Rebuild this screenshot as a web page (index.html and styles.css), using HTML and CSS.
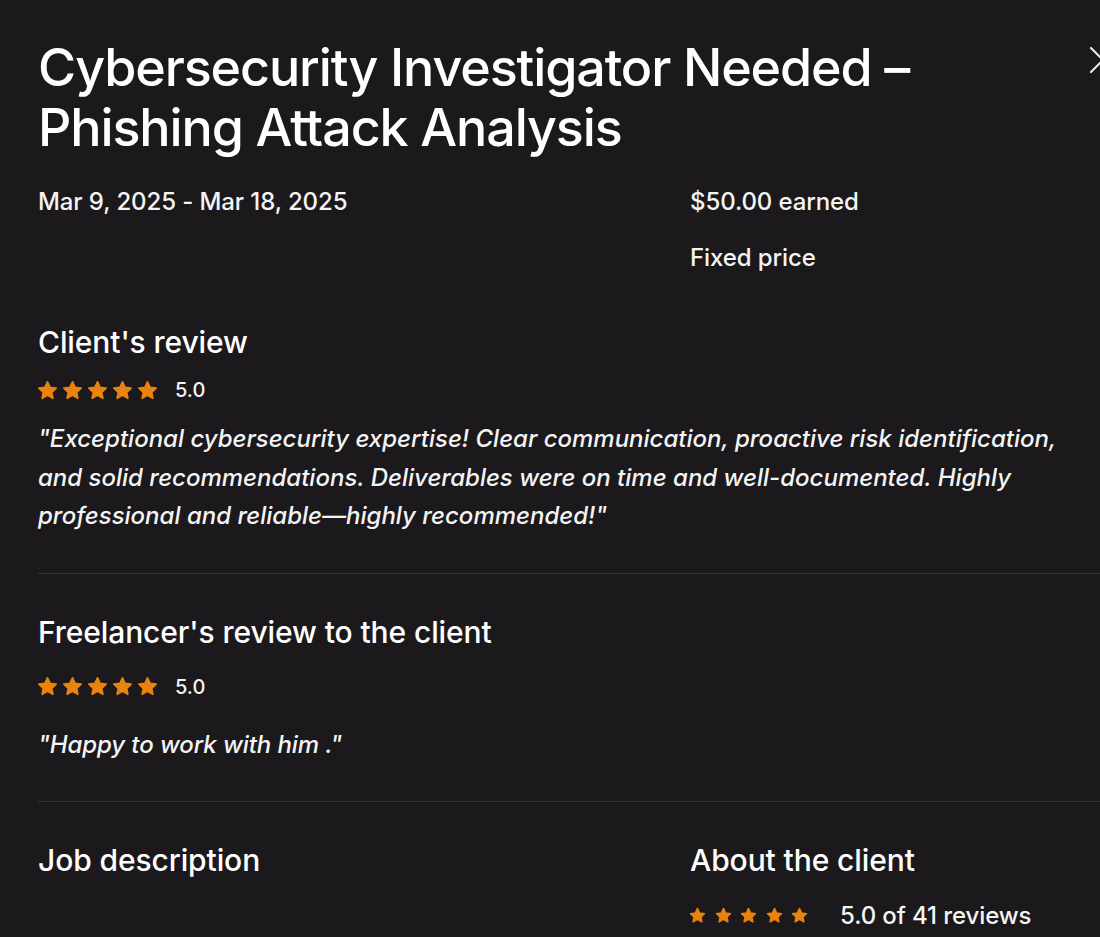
FILE: index.html
```html
<!DOCTYPE html>
<html>
<head>
<meta charset="utf-8">
<link rel="stylesheet" href="styles.css">
</head>
<body>
<div class="modal">
  <button class="close" aria-label="Close">
    <svg width="30" height="30" viewBox="0 0 30 30"><path d="M3 3 L27 27 M27 3 L3 27" stroke="#e8e8e8" stroke-width="2.2" fill="none" stroke-linecap="round"/></svg>
  </button>
  <h1 class="title">Cybersecurity Investigator Needed –<br>Phishing Attack Analysis</h1>

  <div class="meta">
    <div class="meta-left">Mar 9, 2025 - Mar 18, 2025</div>
    <div class="meta-right">
      <div class="earned">$50.00 earned</div>
      <div class="price-type">Fixed price</div>
    </div>
  </div>

  <section class="review">
    <h2 class="section-title">Client's review</h2>
    <div class="rating">
      <span class="stars">
        <svg viewBox="0 0 24 24"><path d="M12 3l2.7 5.8 6.3.8-4.6 4.3 1.2 6.2L12 17l-5.6 3.1 1.2-6.2L3 9.6l6.3-.8z"/></svg>
        <svg viewBox="0 0 24 24"><path d="M12 3l2.7 5.8 6.3.8-4.6 4.3 1.2 6.2L12 17l-5.6 3.1 1.2-6.2L3 9.6l6.3-.8z"/></svg>
        <svg viewBox="0 0 24 24"><path d="M12 3l2.7 5.8 6.3.8-4.6 4.3 1.2 6.2L12 17l-5.6 3.1 1.2-6.2L3 9.6l6.3-.8z"/></svg>
        <svg viewBox="0 0 24 24"><path d="M12 3l2.7 5.8 6.3.8-4.6 4.3 1.2 6.2L12 17l-5.6 3.1 1.2-6.2L3 9.6l6.3-.8z"/></svg>
        <svg viewBox="0 0 24 24"><path d="M12 3l2.7 5.8 6.3.8-4.6 4.3 1.2 6.2L12 17l-5.6 3.1 1.2-6.2L3 9.6l6.3-.8z"/></svg>
      </span>
      <span class="score">5.0</span>
    </div>
    <p class="quote">"Exceptional cybersecurity expertise! Clear communication, proactive risk identification, and solid recommendations. Deliverables were on time and well-documented. Highly professional and reliable—highly recommended!"</p>
  </section>

  <hr class="divider">

  <section class="review review-2">
    <h2 class="section-title">Freelancer's review to the client</h2>
    <div class="rating">
      <span class="stars">
        <svg viewBox="0 0 24 24"><path d="M12 3l2.7 5.8 6.3.8-4.6 4.3 1.2 6.2L12 17l-5.6 3.1 1.2-6.2L3 9.6l6.3-.8z"/></svg>
        <svg viewBox="0 0 24 24"><path d="M12 3l2.7 5.8 6.3.8-4.6 4.3 1.2 6.2L12 17l-5.6 3.1 1.2-6.2L3 9.6l6.3-.8z"/></svg>
        <svg viewBox="0 0 24 24"><path d="M12 3l2.7 5.8 6.3.8-4.6 4.3 1.2 6.2L12 17l-5.6 3.1 1.2-6.2L3 9.6l6.3-.8z"/></svg>
        <svg viewBox="0 0 24 24"><path d="M12 3l2.7 5.8 6.3.8-4.6 4.3 1.2 6.2L12 17l-5.6 3.1 1.2-6.2L3 9.6l6.3-.8z"/></svg>
        <svg viewBox="0 0 24 24"><path d="M12 3l2.7 5.8 6.3.8-4.6 4.3 1.2 6.2L12 17l-5.6 3.1 1.2-6.2L3 9.6l6.3-.8z"/></svg>
      </span>
      <span class="score">5.0</span>
    </div>
    <p class="quote quote-short">"Happy to work with him ."</p>
  </section>

  <hr class="divider divider-2">

  <div class="bottom">
    <div class="bottom-left">
      <h2 class="section-title">Job description</h2>
    </div>
    <div class="bottom-right">
      <h2 class="section-title">About the client</h2>
      <div class="rating rating-client">
        <span class="stars stars-small">
          <svg viewBox="0 0 24 24"><path d="M12 3l2.7 5.8 6.3.8-4.6 4.3 1.2 6.2L12 17l-5.6 3.1 1.2-6.2L3 9.6l6.3-.8z"/></svg>
          <svg viewBox="0 0 24 24"><path d="M12 3l2.7 5.8 6.3.8-4.6 4.3 1.2 6.2L12 17l-5.6 3.1 1.2-6.2L3 9.6l6.3-.8z"/></svg>
          <svg viewBox="0 0 24 24"><path d="M12 3l2.7 5.8 6.3.8-4.6 4.3 1.2 6.2L12 17l-5.6 3.1 1.2-6.2L3 9.6l6.3-.8z"/></svg>
          <svg viewBox="0 0 24 24"><path d="M12 3l2.7 5.8 6.3.8-4.6 4.3 1.2 6.2L12 17l-5.6 3.1 1.2-6.2L3 9.6l6.3-.8z"/></svg>
          <svg viewBox="0 0 24 24"><path d="M12 3l2.7 5.8 6.3.8-4.6 4.3 1.2 6.2L12 17l-5.6 3.1 1.2-6.2L3 9.6l6.3-.8z"/></svg>
        </span>
        <span class="score score-client">5.0 of 41 reviews</span>
      </div>
    </div>
  </div>
</div>
</body>
</html>
```

FILE: styles.css
```css
html, body {
  margin: 0;
  padding: 0;
  background: #1b191c;
  height: 100%;
  overflow: hidden;
}
body {
  font-family: Inter, "Liberation Sans", Arial, sans-serif;
  color: #f4f4f4;
}
.modal {
  position: relative;
  padding: 38px 0 0 38px;
  width: 1200px;
  box-sizing: border-box;
}
.close {
  position: absolute;
  left: 1088px;
  top: 45px;
  background: none;
  border: 0;
  padding: 0;
  width: 30px;
  height: 30px;
}
.close svg { display: block; }
.title {
  margin: 0;
  font-size: 52px;
  line-height: 60px;
  font-weight: 500;
  letter-spacing: -1.1px;
  color: #ffffff;
}
.meta {
  display: flex;
  margin-top: 30px;
  font-size: 24px;
  line-height: 28px;
  font-weight: 500;
  letter-spacing: -0.1px;
}
.meta-left { width: 652px; }
.meta-right { display: flex; flex-direction: column; gap: 28px; }
.review { margin-top: 54px; }
.section-title {
  margin: 0;
  font-size: 30px;
  line-height: 32px;
  font-weight: 500;
  letter-spacing: -0.1px;
  color: #ffffff;
}
.rating {
  display: flex;
  align-items: center;
  margin-top: 20px;
  height: 24px;
}
.stars { display: flex; gap: 2px; margin-left: -2px; }
.stars svg {
  width: 23px;
  height: 23px;
  fill: #e9820f;
  stroke: #e9820f;
  stroke-width: 1.8;
  stroke-linejoin: round;
  display: block;
}
.score { margin-left: 16px; font-size: 20px; font-weight: 500; }
.quote {
  margin: 18px 0 0;
  font-style: italic;
  font-size: 24px;
  line-height: 38.5px;
  font-weight: 500;
  width: 1040px;
  letter-spacing: 0;
}
.divider {
  border: 0;
  border-top: 1px solid #343236;
  margin: 37px 0 0;
  width: 1140px;
}
.review-2 { margin-top: 42px; }
.review-2 .rating { margin-top: 27px; }
.quote-short { margin-top: 27px; letter-spacing: -0.1px; }
.divider-2 { margin-top: 37px; }
.bottom { display: flex; margin-top: 42px; }
.bottom-left { width: 652px; }
.rating-client { margin-top: 27px; }
.stars-small { gap: 6.5px; }
.stars-small svg { width: 19px; height: 19px; }
.score-client { margin-left: 31px; font-size: 24px; letter-spacing: -0.1px; }
```
